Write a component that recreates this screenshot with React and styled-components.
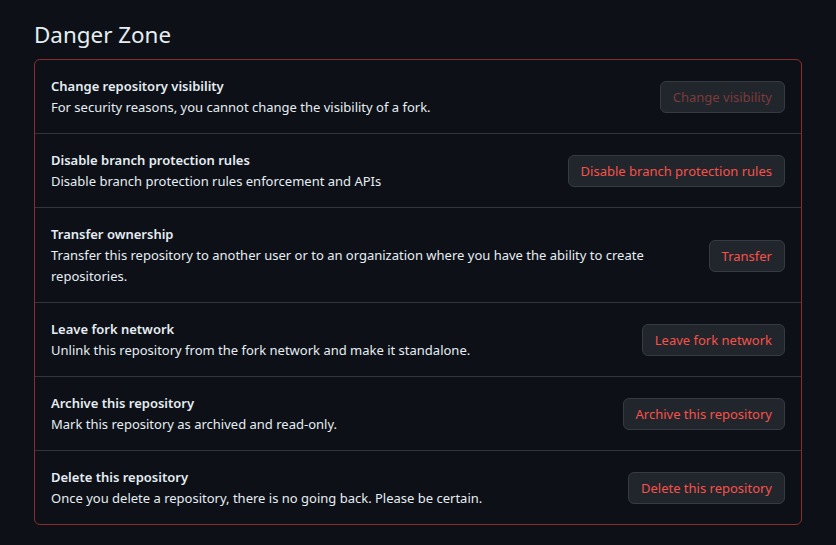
import React from "react";
import styled, { createGlobalStyle } from "styled-components";

const GlobalStyle = createGlobalStyle`
  html, body {
    margin: 0;
    padding: 0;
    background-color: #0d1117;
  }
  body {
    font-family: "Noto Sans", "Open Sans", sans-serif;
    color: #e6edf3;
  }
`;

const Page = styled.div`
  padding: 17px 34px 20px 34px;
`;

const Heading = styled.h2`
  margin: 0 0 6px;
  font-size: 22.4px;
  line-height: 36px;
  font-weight: 400;
  color: #e6edf3;
`;

const Box = styled.div`
  border: 1px solid #8b2d2d;
  border-radius: 6px;
`;

const Row = styled.div`
  display: flex;
  align-items: center;
  justify-content: space-between;
  gap: 16px;
  padding: 16px 16px 15px;
  border-top: ${(p) => (p.first ? "none" : "1px solid #30363d")};
`;

const Text = styled.div`
  flex: 1;
  min-width: 0;
`;

const Title = styled.div`
  font-size: 13px;
  line-height: 21px;
  font-weight: 600;
`;

const Desc = styled.div`
  font-size: 13px;
  line-height: 21px;
`;

const Button = styled.button`
  flex-shrink: 0;
  height: 32px;
  padding: 0 12px;
  border-radius: 6px;
  border: 1px solid #363b42;
  background-color: #21262d;
  color: ${(p) => (p.disabled ? "#7d3a3a" : "#f85149")};
  font-family: inherit;
  font-size: 13px;
  font-weight: 400;
  cursor: ${(p) => (p.disabled ? "not-allowed" : "pointer")};
`;

const rows = [
  {
    title: "Change repository visibility",
    desc: "For security reasons, you cannot change the visibility of a fork.",
    action: "Change visibility",
    disabled: true,
  },
  {
    title: "Disable branch protection rules",
    desc: "Disable branch protection rules enforcement and APIs",
    action: "Disable branch protection rules",
  },
  {
    title: "Transfer ownership",
    desc: "Transfer this repository to another user or to an organization where you have the ability to create repositories.",
    action: "Transfer",
  },
  {
    title: "Leave fork network",
    desc: "Unlink this repository from the fork network and make it standalone.",
    action: "Leave fork network",
  },
  {
    title: "Archive this repository",
    desc: "Mark this repository as archived and read-only.",
    action: "Archive this repository",
  },
  {
    title: "Delete this repository",
    desc: "Once you delete a repository, there is no going back. Please be certain.",
    action: "Delete this repository",
  },
];

const App = () => {
  return (
    <>
      <GlobalStyle />
      <Page>
        <Heading>Danger Zone</Heading>
        <Box>
          {rows.map((r, i) => (
            <Row key={r.title} first={i === 0}>
              <Text>
                <Title>{r.title}</Title>
                <Desc>{r.desc}</Desc>
              </Text>
              <Button type="button" disabled={r.disabled}>
                {r.action}
              </Button>
            </Row>
          ))}
        </Box>
      </Page>
    </>
  );
};

export default App;
